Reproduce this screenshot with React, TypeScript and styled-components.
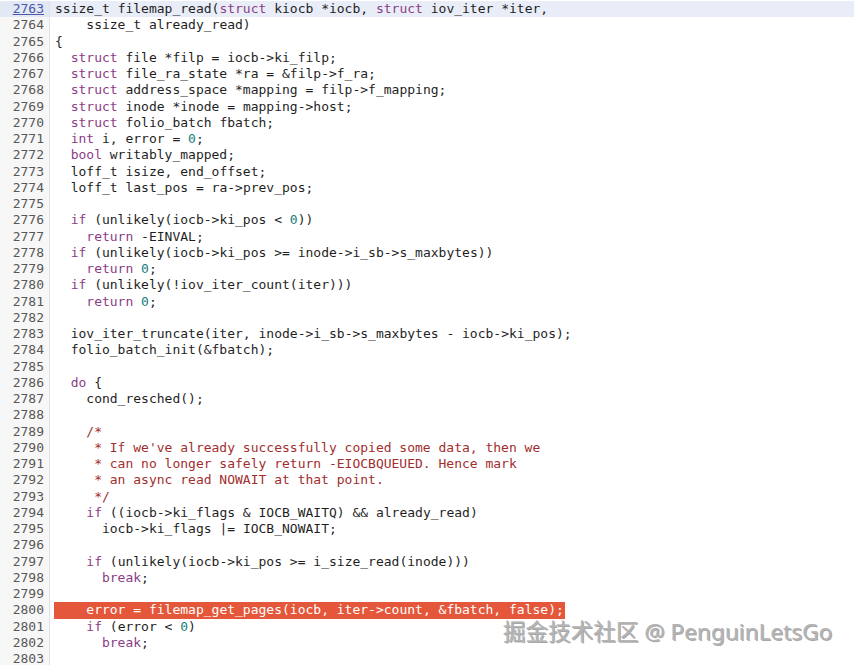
import React from 'react';
import styled, { createGlobalStyle } from 'styled-components';

const GlobalStyle = createGlobalStyle`
    html, body {
        margin: 0;
        padding: 0;
        background: #ffffff;
    }
    body {
        width: 854px;
        height: 665px;
        overflow: hidden;
    }
`;

const FIRST_LINE = 2763;
const CURRENT_LINE = 2800;

// source text, one entry per line
const source: string[] = [
    'ssize_t filemap_read(struct kiocb *iocb, struct iov_iter *iter,',
    '    ssize_t already_read)',
    '{',
    '  struct file *filp = iocb->ki_filp;',
    '  struct file_ra_state *ra = &filp->f_ra;',
    '  struct address_space *mapping = filp->f_mapping;',
    '  struct inode *inode = mapping->host;',
    '  struct folio_batch fbatch;',
    '  int i, error = 0;',
    '  bool writably_mapped;',
    '  loff_t isize, end_offset;',
    '  loff_t last_pos = ra->prev_pos;',
    '',
    '  if (unlikely(iocb->ki_pos < 0))',
    '    return -EINVAL;',
    '  if (unlikely(iocb->ki_pos >= inode->i_sb->s_maxbytes))',
    '    return 0;',
    '  if (unlikely(!iov_iter_count(iter)))',
    '    return 0;',
    '',
    '  iov_iter_truncate(iter, inode->i_sb->s_maxbytes - iocb->ki_pos);',
    '  folio_batch_init(&fbatch);',
    '',
    '  do {',
    '    cond_resched();',
    '',
    '    /*',
    "     * If we've already successfully copied some data, then we",
    '     * can no longer safely return -EIOCBQUEUED. Hence mark',
    '     * an async read NOWAIT at that point.',
    '     */',
    '    if ((iocb->ki_flags & IOCB_WAITQ) && already_read)',
    '      iocb->ki_flags |= IOCB_NOWAIT;',
    '',
    '    if (unlikely(iocb->ki_pos >= i_size_read(inode)))',
    '      break;',
    '',
    '    error = filemap_get_pages(iocb, iter->count, &fbatch, false);',
    '    if (error < 0)',
    '      break;',
    '',
];

const KEYWORDS = ['struct', 'int', 'bool', 'if', 'return', 'do', 'break'];

type Kind = 'plain' | 'keyword' | 'number' | 'comment';

interface Token {
    kind: Kind;
    text: string;
}

function tokenize(line: string): Token[] {
    const trimmed = line.trim();
    if (trimmed.startsWith('/*') || trimmed.startsWith('*')) {
        return [{ kind: 'comment', text: line }];
    }
    const tokens: Token[] = [];
    const re = /([A-Za-z_][A-Za-z0-9_]*)|(\d+)|([^A-Za-z0-9_]+)/g;
    let m: RegExpExecArray | null;
    while ((m = re.exec(line)) !== null) {
        if (m[1]) {
            tokens.push({ kind: KEYWORDS.includes(m[1]) ? 'keyword' : 'plain', text: m[1] });
        } else if (m[2]) {
            tokens.push({ kind: 'number', text: m[2] });
        } else {
            tokens.push({ kind: 'plain', text: m[3] });
        }
    }
    return tokens;
}

const colours: Record<Kind, string> = {
    plain: '#1f1f1f',
    keyword: '#8b3d86',
    number: '#167c7c',
    comment: '#a12e2e',
};

const Page = styled.div`
    position: relative;
    width: 854px;
    height: 665px;
    overflow: hidden;
    background: #ffffff;
    font-family: "DejaVu Sans Mono", "Liberation Mono", monospace;
    font-size: 13px;
    line-height: 16.25px;
`;

const Listing = styled.div`
    display: flex;
    flex-direction: column;
    padding-top: 1px;
`;

const Row = styled.div<{ $selected?: boolean }>`
    display: flex;
    height: 16.25px;
    background: ${p => (p.$selected ? '#e9edf8' : 'transparent')};
`;

const LineNo = styled.div<{ $selected?: boolean }>`
    flex: 0 0 50px;
    box-sizing: border-box;
    padding-right: 5px;
    text-align: right;
    color: ${p => (p.$selected ? '#4a5aa8' : '#585858')};
    text-decoration: ${p => (p.$selected ? 'underline' : 'none')};
    background: ${p => (p.$selected ? '#e3e8f5' : '#f7f7f7')};
    border-right: 1px solid #e2e2e2;
`;

const Code = styled.pre`
    margin: 0;
    padding-left: 5px;
    font: inherit;
    white-space: pre;
`;

const Current = styled.span`
    display: inline-block;
    background: #e5573a;
    padding-left: 1px;
    margin-left: -1px;
    padding-right: 1px;
    & span {
        color: #ffffff !important;
    }
`;

const Tok = styled.span<{ $kind: Kind }>`
    color: ${p => colours[p.$kind]};
`;

const Watermark = styled.div`
    position: absolute;
    left: 503px;
    top: 620px;
    font-family: "Noto Sans", "Noto Sans CJK SC", sans-serif;
    font-size: 22.6px;
    line-height: 24px;
    color: #b4b4b4;
    text-shadow: 1px 1px 0 rgba(0, 0, 0, 0.35), -0.5px -0.5px 0 rgba(0, 0, 0, 0.15);
    white-space: nowrap;
`;

const CodeLine: React.FC<{ text: string; current: boolean }> = ({ text, current }) => {
    const tokens = tokenize(text).map((t, i) => (
        <Tok key={i} $kind={t.kind}>{t.text}</Tok>
    ));
    return <Code>{current ? <Current>{tokens}</Current> : tokens}</Code>;
};

const App: React.FC = () => {
    return (
        <>
            <GlobalStyle />
            <Page>
                <Listing>
                    {source.map((text, i) => {
                        const n = FIRST_LINE + i;
                        const selected = i === 0;
                        return (
                            <Row key={n} $selected={selected}>
                                <LineNo $selected={selected}>{n}</LineNo>
                                <CodeLine text={text} current={n === CURRENT_LINE} />
                            </Row>
                        );
                    })}
                </Listing>
                <Watermark>掘金技术社区 @ PenguinLetsGo</Watermark>
            </Page>
        </>
    );
};

export default App;
